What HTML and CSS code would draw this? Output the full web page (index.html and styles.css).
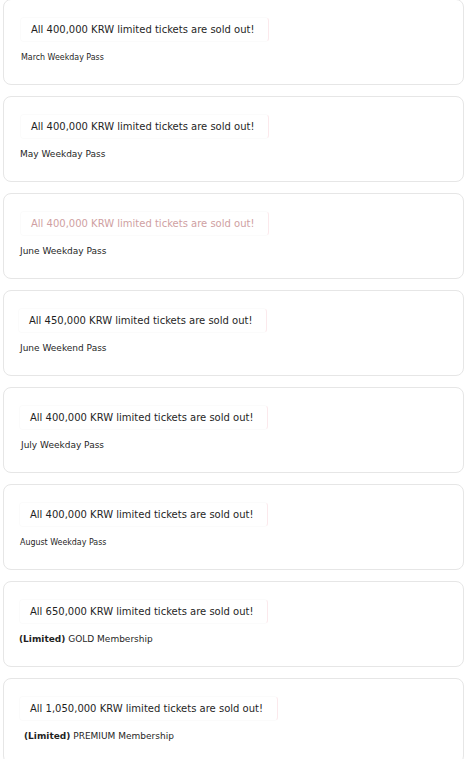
FILE: index.html
```html
<!DOCTYPE html>
<html lang="en">
<head>
<meta charset="utf-8">
<title>Passes</title>
<link rel="stylesheet" href="styles.css">
</head>
<body>
<div class="list">
  <div class="card">
    <div class="pill"><span class="notice">All 400,000 KRW limited tickets are sold out!</span></div>
    <div class="name name-condensed name-nudge">March Weekday Pass</div>
  </div>
  <div class="card">
    <div class="pill"><span class="notice">All 400,000 KRW limited tickets are sold out!</span></div>
    <div class="name">May Weekday Pass</div>
  </div>
  <div class="card">
    <div class="pill"><span class="notice faded">All 400,000 KRW limited tickets are sold out!</span></div>
    <div class="name">June Weekday Pass</div>
  </div>
  <div class="card">
    <div class="pill shift-left"><span class="notice">All 450,000 KRW limited tickets are sold out!</span></div>
    <div class="name">June Weekend Pass</div>
  </div>
  <div class="card">
    <div class="pill shift-half"><span class="notice">All 400,000 KRW limited tickets are sold out!</span></div>
    <div class="name name-nudge">July Weekday Pass</div>
  </div>
  <div class="card">
    <div class="pill shift-half"><span class="notice">All 400,000 KRW limited tickets are sold out!</span></div>
    <div class="name name-condensed">August Weekday Pass</div>
  </div>
  <div class="card">
    <div class="pill shift-half"><span class="notice">All 650,000 KRW limited tickets are sold out!</span></div>
    <div class="name name-tight"><b>(Limited)</b> GOLD Membership</div>
  </div>
  <div class="card">
    <div class="pill shift-half"><span class="notice">All 1,050,000 KRW limited tickets are sold out!</span></div>
    <div class="name name-indent"><b>(Limited)</b> PREMIUM Membership</div>
  </div>
</div>
</body>
</html>
```

FILE: styles.css
```css
html, body {
  margin: 0;
  padding: 0;
  background: #ffffff;
}

body {
  font-family: "DejaVu Sans", sans-serif;
  color: #1f1f1f;
}

.list {
  display: flex;
  flex-direction: column;
  gap: 11px;
  margin: -1px 0 0 3px;
  width: 461px;
}

.card {
  box-sizing: border-box;
  height: 86px;
  border: 1px solid #e6e6e6;
  border-radius: 8px;
  padding: 17px 16px 0 16px;
  background: #ffffff;
}

.pill {
  display: inline-block;
  padding: 5px 14px 5px 10px;
  border: 1px solid #fbfbfb;
  border-right-color: #fbe9ec;
  border-radius: 4px;
}

.shift-left {
  margin-left: -2px;
}

.shift-half {
  margin-left: -1px;
}

.notice {
  display: block;
  font-size: 10px;
  line-height: 13px;
  color: #1f1f1f;
  white-space: nowrap;
}

.notice.faded {
  color: #cf9fa2;
}

.name {
  margin-top: 9px;
  font-size: 9px;
  line-height: 12px;
  color: #1f1f1f;
  white-space: nowrap;
}

.name-condensed {
  font-family: "DejaVu Sans Condensed", "DejaVu Sans", sans-serif;
  font-stretch: condensed;
  font-size: 8.8px;
}

.name-nudge {
  margin-left: 1px;
}

.name b {
  font-weight: bold;
}

.name-tight {
  margin-left: -1px;
}

.name-indent {
  margin-left: 4px;
}
```
